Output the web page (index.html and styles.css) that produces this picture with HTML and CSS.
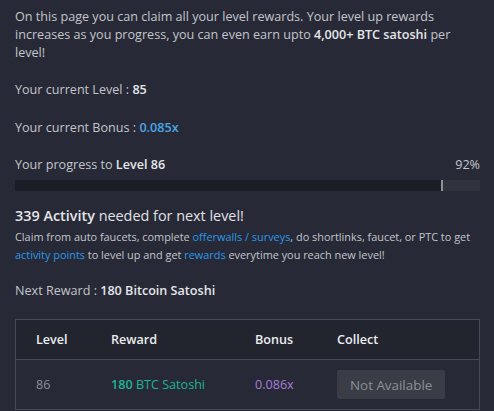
FILE: index.html
```html
<!DOCTYPE html>
<html lang="en">
<head>
    <meta charset="UTF-8">
    <meta name="viewport" content="width=device-width, initial-scale=1.0">
    <title>Level Rewards</title>
    <link rel="stylesheet" href="styles.css">
</head>
<body>
    <div class="content">
        <p class="intro">On this page you can claim all your level rewards. Your level up rewards increases as you progress, you can even earn upto <b>4,000+ BTC satoshi</b> per level!</p>
        <p class="stat level">Your current Level : <b>85</b></p>
        <p class="stat">Your current Bonus : <b class="bonus">0.085x</b></p>
        <div class="progress-head">
            <span>Your progress to <b>Level 86</b></span>
            <span>92%</span>
        </div>
        <div class="progress">
            <div class="progress-fill" style="width: 92%"></div>
        </div>
        <h4 class="needed"><b>339 Activity</b> needed for next level!</h4>
        <p class="hint">Claim from auto faucets, complete <a href="#">offerwalls / surveys</a>, do shortlinks, faucet, or PTC to get <a href="#">activity points</a> to level up and get <a href="#">rewards</a> everytime you reach new level!</p>
        <p class="stat next">Next Reward : <b>180 Bitcoin Satoshi</b></p>
        <table class="rewards">
            <thead>
                <tr>
                    <th class="col-level">Level</th>
                    <th class="col-reward">Reward</th>
                    <th class="col-bonus">Bonus</th>
                    <th>Collect</th>
                </tr>
            </thead>
            <tbody>
                <tr>
                    <td class="muted">86</td>
                    <td class="reward"><b>180</b> BTC Satoshi</td>
                    <td class="row-bonus">0.086x</td>
                    <td><button disabled>Not Available</button></td>
                </tr>
            </tbody>
        </table>
    </div>
</body>
</html>
```

FILE: styles.css
```css
body {
    background: #272a36;
    margin: 0;
    font-family: 'Open Sans', sans-serif;
    color: #c3c5cb;
    font-size: 12.6px;
}
.content {
    padding: 8px 14px 0 15px;
}
b {
    color: #e4e5e8;
    font-weight: 600;
}
p {
    margin: 0;
}
.intro {
    line-height: 18px;
    margin-bottom: 19px;
}
.stat {
    line-height: 18px;
    margin-bottom: 19px;
}
.stat.level {
    margin-bottom: 20px;
}
.bonus {
    color: #4aa6e6;
}
.progress-head {
    display: flex;
    justify-content: space-between;
    line-height: 18px;
    margin-bottom: 6px;
}
.progress {
    height: 11px;
    background: #30333e;
    margin-bottom: 15px;
}
.progress-fill {
    height: 100%;
    background: #1c1e27;
    border-right: 2px solid #8d9098;
    box-sizing: border-box;
}
.needed {
    margin: 0 0 2px;
    font-size: 14.4px;
    font-weight: 400;
    line-height: 20px;
    color: #e0e1e4;
}
.hint {
    font-size: 10.9px;
    line-height: 18px;
    margin-bottom: 18px;
}
.hint a {
    color: #2a97eb;
    text-decoration: none;
}
.next {
    margin-bottom: 19px;
}
.rewards {
    width: 100%;
    table-layout: fixed;
    border-collapse: collapse;
    border: 1px solid #474a54;
}
.rewards thead {
    background: #22242e;
}
.rewards th {
    text-align: left;
    font-weight: 600;
    color: #ecedf0;
    height: 39px;
    padding: 0;
    border-bottom: 1px solid #474a54;
}
.rewards td {
    height: 49px;
    padding: 0;
}
.rewards th:first-child, .rewards td:first-child {
    padding-left: 20px;
}
.col-level {
    width: 75px;
}
.col-reward {
    width: 144px;
}
.col-bonus {
    width: 82px;
}
.muted {
    color: #8b8e96;
}
.reward, .reward b {
    color: #1fb39a;
}
.row-bonus {
    color: #a87dd6;
}
.rewards button {
    background: #3a3d46;
    color: #8c8f96;
    border: none;
    border-radius: 2px;
    font-family: 'Open Sans', sans-serif;
    font-size: 13.4px;
    padding: 0 13px;
    height: 29px;
}
```
